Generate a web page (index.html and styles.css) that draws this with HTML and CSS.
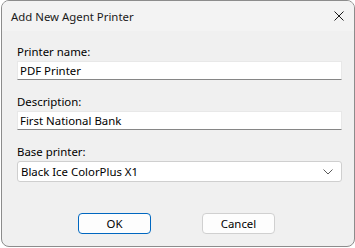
FILE: index.html
```html
<!DOCTYPE html>
<html lang="en">
<head>
  <meta charset="UTF-8" />
  <title>Add New Agent Printer</title>
  <link rel="stylesheet" href="styles.css">
</head>
<body>
  <div class="dialog">
    <div class="titlebar">
      <span class="title">Add New Agent Printer</span>
      <span class="close">
        <svg width="10" height="10" viewBox="0 0 10 10"><path d="M0.5 0.5 L9.5 9.5 M9.5 0.5 L0.5 9.5" stroke="#1a1a1a" stroke-width="1"/></svg>
      </span>
    </div>
    <div class="client">
      <label class="field-label">Printer name:</label>
      <div class="textbox">PDF Printer</div>

      <label class="field-label">Description:</label>
      <div class="textbox">First National Bank</div>

      <label class="field-label">Base printer:</label>
      <div class="combo">
        <span>Black Ice ColorPlus X1</span>
        <svg width="10" height="6" viewBox="0 0 10 6"><path d="M0.5 0.5 L5 5 L9.5 0.5" fill="none" stroke="#5a5a5a" stroke-width="1"/></svg>
      </div>

      <div class="buttons">
        <button class="btn default">OK</button>
        <button class="btn">Cancel</button>
      </div>
    </div>
  </div>
</body>
</html>
```

FILE: styles.css
```css
body {
  margin: 0;
  background: #ffffff;
  font-family: "Noto Sans", sans-serif;
  font-size: 11.4px;
  color: #000;
}
.dialog {
  margin-left: 1px;
  width: 354px;
  height: 247px;
  box-sizing: border-box;
  border: 1px solid #8c8c8c;
  border-radius: 8px;
  overflow: hidden;
  background: #f0f0f0;
  display: flex;
  flex-direction: column;
}
.titlebar {
  height: 30px;
  background: #f3f3f3;
  display: flex;
  align-items: center;
  justify-content: space-between;
  padding: 0 10px 0 9px;
}
.title {
  color: #1a1a1a;
}
.close {
  display: flex;
  margin-right: 0;
}
.client {
  padding: 13px 12px 0 15px;
  display: flex;
  flex-direction: column;
}
.field-label {
  line-height: 16px;
  margin-bottom: 1px;
}
.textbox {
  height: 19px;
  box-sizing: border-box;
  background: #fff;
  border: 1px solid #e8e8e8;
  border-bottom-color: #868686;
  padding: 1px 2px;
  line-height: 16px;
  margin-bottom: 14px;
}
.combo {
  height: 21px;
  box-sizing: border-box;
  background: #fff;
  border: 1px solid #cfcfcf;
  border-radius: 3px;
  padding: 0 8px 0 3px;
  display: flex;
  align-items: center;
  justify-content: space-between;
}
.buttons {
  display: flex;
  gap: 51px;
  margin-top: 31px;
  padding-left: 61px;
}
.btn {
  width: 73px;
  height: 21px;
  box-sizing: border-box;
  background: #fdfdfd;
  border: 1px solid #d0d0d0;
  border-radius: 4px;
  font: inherit;
  color: #000;
  padding: 0;
}
.btn.default {
  border: 1px solid #0067c0;
}
```
